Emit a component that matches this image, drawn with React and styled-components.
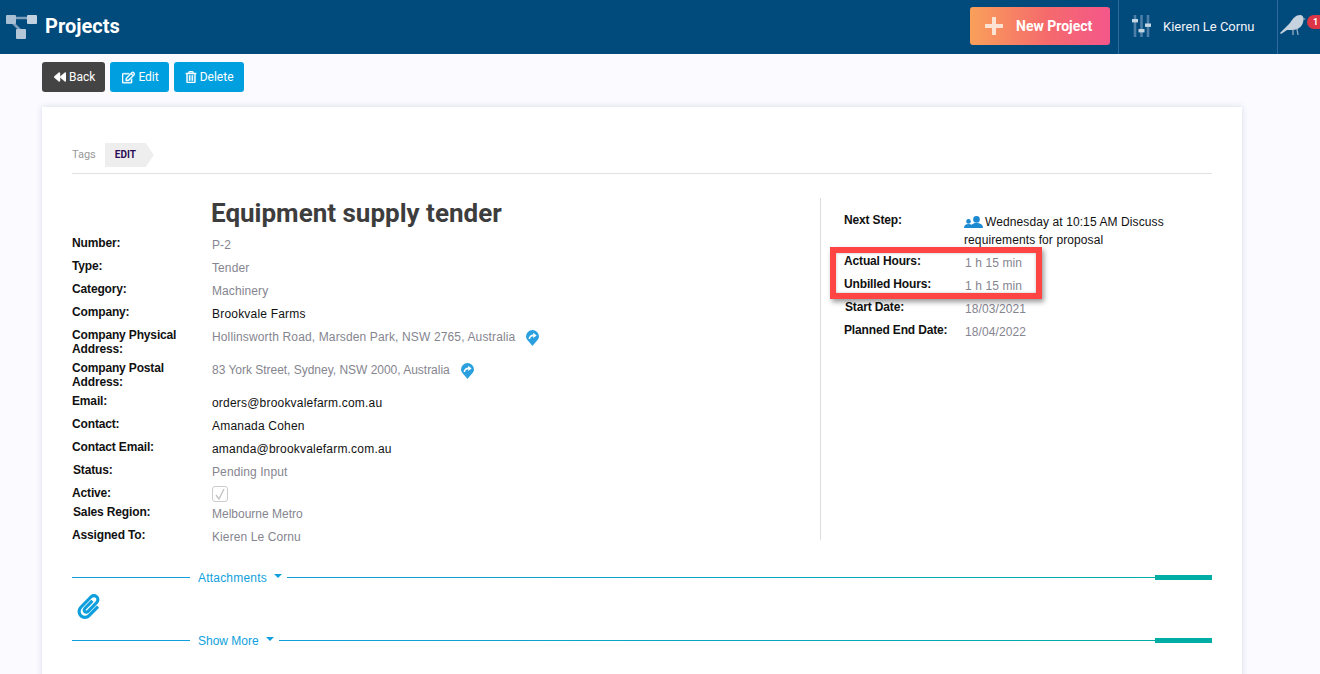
import React from "react";
import styled, { createGlobalStyle } from "styled-components";
import { FaBackward, FaRegEdit, FaRegTrashAlt, FaPaperclip } from "react-icons/fa";

const Global = createGlobalStyle`
  html, body { margin: 0; height: 674px; overflow: hidden; background: #fafaff; }
  * { box-sizing: border-box; }
`;

const Topbar = styled.header`
  height: 54px;
  background: #004a7c;
  display: flex;
  align-items: flex-start;
  font-family: Roboto, sans-serif;
  color: #fff;
  overflow: hidden;
`;
const Brand = styled.div`
  display: flex;
  align-items: center;
  height: 52px;
  padding-left: 6px;
  gap: 8px;
  flex: 1;
`;
const PageTitle = styled.div`
  font-size: 20px;
  font-weight: 700;
`;
const NewButton = styled.div`
  width: 140px;
  height: 38px;
  margin: 7px 8px 0 0;
  border-radius: 3px;
  background: linear-gradient(90deg, #f9a05a 0%, #f56a6c 55%, #f4578a 100%);
  display: flex;
  align-items: center;
  padding-left: 15px;
  gap: 13px;
  font-size: 14px;
  font-weight: 700;
`;
const Section = styled.div`
  height: 54px;
  border-left: 1px solid #31699a;
  display: flex;
  align-items: center;
  width: ${(p) => p.$w}px;
  padding: 0 0 2px ${(p) => p.$pad}px;
  gap: 12px;
  position: relative;
`;
const UserName = styled.span`
  font-size: 13px;
  color: #f0f4f8;
`;
const Badge = styled.span`
  position: absolute;
  left: 29px;
  top: 15px;
  width: 20px;
  height: 14px;
  border-radius: 7px;
  background: #dc3545;
  font-size: 9px;
  font-weight: 700;
  padding-left: 6px;
  line-height: 14px;
`;
const Toolbar = styled.div`
  display: flex;
  gap: 5px;
  padding: 8px 0 0 42px;
`;
const ToolButton = styled.button`
  height: 30px;
  padding: 0 10px 0 ${(p) => p.$pl || 12}px;
  border: 0;
  border-radius: 3px;
  background: ${(p) => (p.$dark ? "#444444" : "#009fe0")};
  color: #fff;
  font-family: Roboto, sans-serif;
  font-size: 12px;
  display: flex;
  align-items: center;
  gap: 3px;
  svg { stroke: currentColor; stroke-width: 18; }
`;
const Card = styled.main`
  margin: 15px 0 0 42px;
  width: 1200px;
  height: 640px;
  background: #fff;
  box-shadow: 0 0 6px rgba(60, 70, 130, 0.18);
  padding: 0 30px;
`;
const TagsRow = styled.div`
  height: 67px;
  padding-top: 36px;
  border-bottom: 1px solid #e2e2e2;
  display: flex;
  align-items: flex-start;
  gap: 9px;
  font-family: Roboto, sans-serif;
`;
const TagsLabel = styled.span`
  font-size: 11px;
  color: #999;
  line-height: 23px;
`;
const EditTag = styled.span`
  height: 24px;
  width: 49px;
  padding-left: 10px;
  background: #eeeeee;
  color: #2c0c56;
  font-size: 10px;
  font-weight: 700;
  line-height: 24px;
  clip-path: polygon(0 0, 41px 0, 100% 50%, 41px 100%, 0 100%);
`;
const Details = styled.div`
  display: flex;
  margin-top: 24px;
  height: 342px;
`;
const LeftPane = styled.div`
  width: 749px;
  border-right: 1px solid #dddddd;
`;
const ProjectTitle = styled.h1`
  margin: 0 0 0 139px;
  height: 38px;
  font-family: Roboto, sans-serif;
  font-size: 26px;
  line-height: 30px;
  font-weight: 700;
  color: #3d3d3d;
`;
const Row = styled.div`
  display: flex;
  height: ${(p) => p.$h || 23}px;
  font-family: "Liberation Sans", Arial, sans-serif;
  font-size: 12px;
  line-height: 14px;
`;
const Label = styled.div`
  width: ${(p) => p.$w || 140}px;
  font-weight: 700;
  color: #111;
  letter-spacing: -0.15px;
  padding-left: ${(p) => p.$in || 0}px;
  flex: none;
`;
const Value = styled.div`
  padding-top: ${(p) => (p.$top === undefined ? 2 : p.$top)}px;
  color: ${(p) => (p.$dark ? "#111" : "#85858f")};
  letter-spacing: ${(p) => (p.$sp === undefined ? (p.$dark ? 0.2 : 0.1) : p.$sp)}px;
  display: flex;
  gap: 11px;
  height: 18px;
`;
const RightPane = styled.div`
  flex: 1;
  padding: 15px 0 0 23px;
  position: relative;
`;
const NextStep = styled.div`
  width: 210px;
  color: #111;
  line-height: 18px;
  letter-spacing: 0.1px;
  margin-left: -1px;
  svg { vertical-align: 2px; margin: -4px 2px -4px 0; }
`;
const Highlight = styled.div`
  position: absolute;
  left: 9px;
  top: 49px;
  width: 212px;
  height: 52px;
  border: 6px solid #ff4444;
  box-shadow: 2px 3px 5px rgba(0, 0, 0, 0.4), inset 0 0 3px rgba(0, 0, 0, 0.25);
`;
const Check = styled.div`
  width: 16px;
  height: 16px;
  border: 1px solid #cccccc;
  border-radius: 3px;
  display: flex;
  align-items: center;
  justify-content: center;
`;
const Divider = styled.div`
  display: flex;
  align-items: center;
  height: 14px;
  margin-top: ${(p) => p.$mt}px;
  font-family: "Liberation Sans", Arial, sans-serif;
  font-size: 12px;
  color: #0f9fdc;
`;
const LineLeft = styled.div`
  width: 118px;
  height: 1px;
  background: #0f9fdc;
`;
const LineRight = styled.div`
  flex: 1;
  height: 1px;
  background: linear-gradient(90deg, #0f9fdc, #00ada4);
`;
const LineEnd = styled.div`
  width: 57px;
  height: 5px;
  background: #00ada4;
`;
const DividerText = styled.span`
  padding: 2px 5px 0 8px;
  display: flex;
  align-items: center;
  gap: 7px;
  letter-spacing: ${(p) => p.$sp}px;
`;
const Caret = styled.i`
  width: 0;
  height: 0;
  border: 4.5px solid transparent;
  border-top: 4.5px solid #0f9fdc;
  border-bottom: 0;
  margin-top: -5px;
`;
const Clip = styled.div`
  height: 49px;
  padding: 10px 0 0 4px;
  color: #0f9fdc;
  font-size: 25px;
  line-height: 0;
`;

const LogoIcon = () => (
  <svg width="31" height="26" viewBox="0 0 31 26">
    <path d="M7 5 L26 5 M5 8 L16 19" stroke="#7f9fbc" strokeWidth="2.5" fill="none" />
    <rect x="0" y="2" width="10" height="9" rx="1" fill="#a9bfd4" />
    <rect x="21" y="2" width="10" height="9" rx="1" fill="#c3d2e0" />
    <rect x="10" y="16" width="10" height="10" rx="1" fill="#b4c7d9" />
  </svg>
);

const SlidersIcon = () => (
  <svg width="19" height="22" viewBox="0 0 19 22" fill="none">
    <path d="M3 0V22M9.5 0V22M16 0V22" stroke="#4d7ea8" strokeWidth="2.6" />
    <rect x="0" y="4" width="6" height="3.4" fill="#c4d5e3" />
    <rect x="6.5" y="14" width="6" height="3.4" fill="#c4d5e3" />
    <rect x="13" y="8.5" width="6" height="3.4" fill="#c4d5e3" />
  </svg>
);

const BirdIcon = () => (
  <svg width="26" height="22" viewBox="0 0 26 22">
    <path d="M0 18 L10 8 C13 3 16 0 20 0 C22.5 0 23.5 2 23.5 3.5 C23.5 11 19 15 12 15 L7 15 L1 19 Z" fill="#c6d3df" />
    <path d="M23 2.5 L26 4 L23 5.5 Z" fill="#7f9fb9" />
    <path d="M13 15 L13 20 M17 14 L18 20" stroke="#8ea6bc" strokeWidth="1.4" />
  </svg>
);

const PlusIcon = () => (
  <svg width="18" height="18" viewBox="0 0 18 18">
    <path d="M9 1V17M1 9H17" stroke="#fde3d3" strokeWidth="4" strokeLinecap="round" />
  </svg>
);

const DirectionsPin = () => (
  <svg width="13" height="16" viewBox="0 0 13 16">
    <path d="M6.5 0 A6.5 6.5 0 0 1 13 6.5 C13 9.5 9 12.5 6.5 16 C4 12.5 0 9.5 0 6.5 A6.5 6.5 0 0 1 6.5 0 Z" fill="#2ba0de" />
    <path d="M3.4 9 C3.4 6.6 5 5.4 7.6 5.4" stroke="#fff" strokeWidth="1.6" fill="none" />
    <path d="M7.2 2.8 L10.6 5.4 L7.2 8 Z" fill="#fff" />
  </svg>
);

const PeopleIcon = () => (
  <svg width="19" height="12" viewBox="0 0 19 12">
    <circle cx="4.5" cy="5.4" r="2.3" fill="#1c8ad0" />
    <path d="M0 12 C0 9.2 1.6 8 4.5 8 C7.4 8 9 9.2 9 12 Z" fill="#1c8ad0" />
    <circle cx="12.5" cy="3.4" r="3.3" fill="#1c8ad0" />
    <path d="M6.5 12 C6.5 8.4 9 7 12.5 7 C16 7 19 8.4 19 12 Z" fill="#1c8ad0" />
  </svg>
);

const left = [
  { label: "Number:", value: "P-2" },
  { label: "Type:", value: "Tender" },
  { label: "Category:", value: "Machinery" },
  { label: "Company:", value: "Brookvale Farms", dark: true },
  { label: "Company Physical Address:", value: "Hollinsworth Road, Marsden Park, NSW 2765, Australia", pin: true, h: 33, sp: 0.14 },
  { label: "Company Postal Address:", value: "83 York Street, Sydney, NSW 2000, Australia", pin: true, h: 33, sp: -0.02 },
  { label: "Email:", value: "orders@brookvalefarm.com.au", dark: true },
  { label: "Contact:", value: "Amanada Cohen", dark: true },
  { label: "Contact Email:", value: "amanda@brookvalefarm.com.au", dark: true },
  { label: "Status:", value: "Pending Input", indent: 1 },
];

const right = [
  { label: "Actual Hours:", value: "1 h 15 min" },
  { label: "Unbilled Hours:", value: "1 h 15 min" },
  { label: "Start Date:", value: "18/03/2021", indent: 1 },
  { label: "Planned End Date:", value: "18/04/2022" },
];

export default function App() {
  return (
    <>
      <Global />
      <Topbar>
        <Brand>
          <LogoIcon />
          <PageTitle>Projects</PageTitle>
        </Brand>
        <NewButton>
          <PlusIcon />
          New Project
        </NewButton>
        <Section $w={159} $pad={13}>
          <SlidersIcon />
          <UserName>Kieren Le Cornu</UserName>
        </Section>
        <Section $w={43} $pad={2}>
          <BirdIcon />
          <Badge>1</Badge>
        </Section>
      </Topbar>

      <Toolbar>
        <ToolButton $dark>
          <FaBackward size={12} />
          Back
        </ToolButton>
        <ToolButton>
          <FaRegEdit size={13} />
          Edit
        </ToolButton>
        <ToolButton $pl={11}>
          <FaRegTrashAlt size={12} />
          Delete
        </ToolButton>
      </Toolbar>

      <Card>
        <TagsRow>
          <TagsLabel>Tags</TagsLabel>
          <EditTag>EDIT</EditTag>
        </TagsRow>

        <Details>
          <LeftPane>
            <ProjectTitle>Equipment supply tender</ProjectTitle>
            {left.map((r) => (
              <Row key={r.label} $h={r.h}>
                <Label $in={r.indent}>{r.label}</Label>
                <Value $dark={r.dark} $sp={r.sp}>
                  {r.value}
                  {r.pin && <DirectionsPin />}
                </Value>
              </Row>
            ))}
            <Row $h={19}>
              <Label>Active:</Label>
              <Value $top={0}>
                <Check>
                  <svg width="12" height="12" viewBox="0 0 12 12">
                    <path d="M2 7 L5 11 L10 1" stroke="#c4c4c4" strokeWidth="1.4" fill="none" />
                  </svg>
                </Check>
              </Value>
            </Row>
            <Row>
              <Label $in={1}>Sales Region:</Label>
              <Value $sp={0}>Melbourne Metro</Value>
            </Row>
            <Row>
              <Label>Assigned To:</Label>
              <Value>Kieren Le Cornu</Value>
            </Row>
          </LeftPane>

          <RightPane>
            <Row $h={41}>
              <Label $w={121}>Next Step:</Label>
              <NextStep>
                <PeopleIcon />
                Wednesday at 10:15 AM Discuss requirements for proposal
              </NextStep>
            </Row>
            {right.map((r) => (
              <Row key={r.label}>
                <Label $w={121} $in={r.indent}>
                  {r.label}
                </Label>
                <Value>{r.value}</Value>
              </Row>
            ))}
            <Highlight />
          </RightPane>
        </Details>

        <Divider $mt={30}>
          <LineLeft />
          <DividerText $sp={0.2}>
            Attachments <Caret />
          </DividerText>
          <LineRight />
          <LineEnd />
        </Divider>
        <Clip>
          <FaPaperclip />
        </Clip>
        <Divider $mt={0}>
          <LineLeft />
          <DividerText $sp={0}>
            Show More <Caret />
          </DividerText>
          <LineRight />
          <LineEnd />
        </Divider>
      </Card>
    </>
  );
}
